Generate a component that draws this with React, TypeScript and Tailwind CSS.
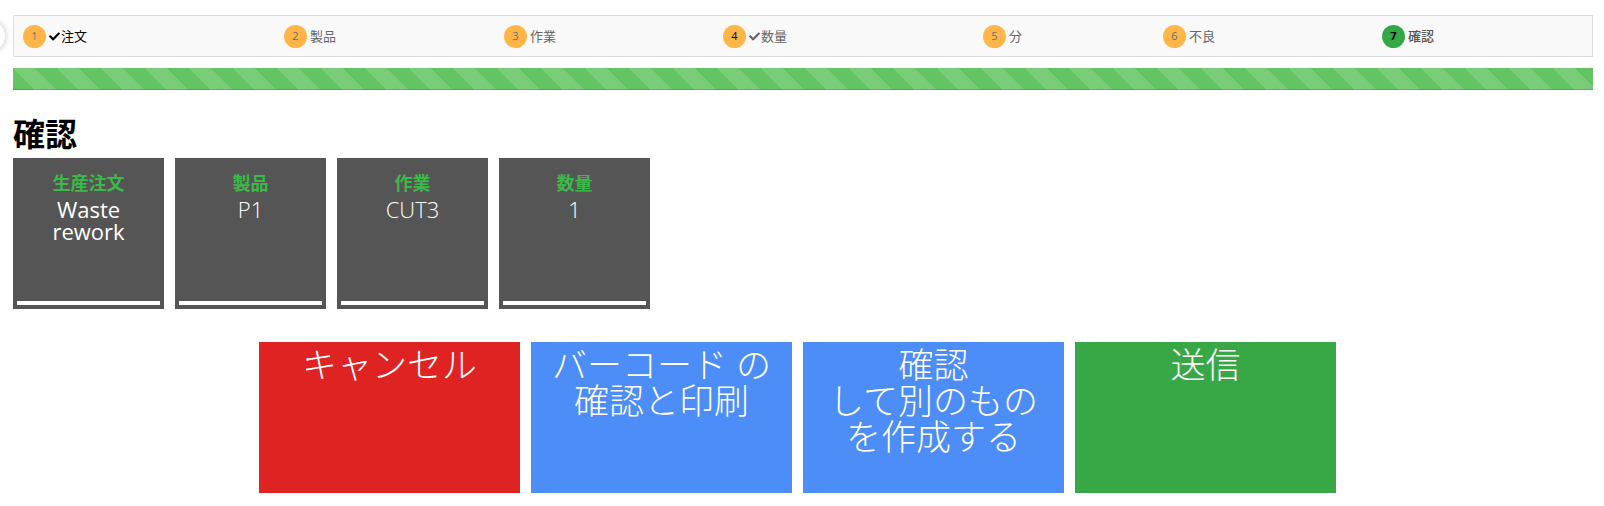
import { FaCheck } from "react-icons/fa";

const STEPS = [
  { n: 1, label: "注文", done: true, state: "current", col: "w-[261px]" },
  { n: 2, label: "製品", done: false, state: "todo", col: "w-[220px]" },
  { n: 3, label: "作業", done: false, state: "todo", col: "w-[219px]" },
  { n: 4, label: "数量", done: true, state: "todo", col: "w-[260px]" },
  { n: 5, label: "分", done: false, state: "todo", col: "w-[180px]" },
  { n: 6, label: "不良", done: false, state: "todo", col: "w-[219px]" },
  { n: 7, label: "確認", done: false, state: "active", col: "flex-1" },
];

const SUMMARY = [
  { title: "生産注文", value: "Waste rework", light: false },
  { title: "製品", value: "P1", light: true },
  { title: "作業", value: "CUT3", light: true },
  { title: "数量", value: "1", light: true },
];

const StepItem = ({ step }: { step: (typeof STEPS)[number] }) => {
  const circle =
    step.state === "active"
      ? "bg-[#33a946] text-black font-bold"
      : step.n === 4
        ? "bg-[#ffb547] text-black"
        : "bg-[#ffb547] text-[#6f6f6f]";
  const text =
    step.state === "current"
      ? "text-black"
      : step.state === "active"
        ? "text-[#555] font-medium"
        : "text-[#666]";

  return (
    <div className={`${step.col} flex items-center`}>
      <span
        className={`w-[23px] h-[23px] rounded-full flex items-center justify-center text-[11px] ${circle}`}
      >
        {step.n}
      </span>
      <span className={`ml-[3px] flex items-center text-[13px] leading-none ${text}`}>
        {step.done && <FaCheck className="w-[11px] h-[11px] mr-[1px]" />}
        {step.label}
      </span>
    </div>
  );
};

const ActionButton = ({ color, lines }: { color: string; lines: string[] }) => (
  <button
    className={`w-[261px] h-[151px] ${color} pt-[5px] text-white text-[35px] leading-[36px] font-light text-center flex flex-col items-center justify-start`}
  >
    {lines.map((l) => (
      <span key={l} className="block whitespace-pre">
        {l}
      </span>
    ))}
  </button>
);

export default function App() {
  return (
    <div className="relative w-[1604px] h-[506px] overflow-hidden bg-white font-['Open_Sans','Noto_Sans_CJK_JP',sans-serif]">
      <div className="absolute -left-[27px] top-[20px] w-[32px] h-[32px] rounded-full bg-white shadow-[0_0_6px_rgba(0,0,0,0.25)]" />

      <div className="pl-[13px] pr-[11px] pt-[15px]">
        <div className="h-[42px] border border-[#dddddd] bg-[#f9f9f9] flex items-center pl-[9px]">
          {STEPS.map((s) => (
            <StepItem key={s.n} step={s} />
          ))}
        </div>

        <div className="mt-[11px] h-[22px] bg-[#62c462] bg-[linear-gradient(45deg,rgba(255,255,255,0.15)_25%,transparent_25%,transparent_50%,rgba(255,255,255,0.15)_50%,rgba(255,255,255,0.15)_75%,transparent_75%,transparent)] bg-[length:44px_44px] shadow-[inset_0_-1px_0_rgba(0,0,0,0.15)]" />

        <h2 className="mt-[25px] text-[32px] leading-[38px] font-bold text-black">確認</h2>

        <div className="mt-[5px] flex gap-[11px]">
          {SUMMARY.map((item) => (
            <div
              key={item.title}
              className="w-[151px] h-[151px] bg-[#555555] flex flex-col items-center pt-[13px]"
            >
              <p className="text-[18px] leading-[24px] font-bold text-[#3cb94a]">{item.title}</p>
              <p
                className={`mt-[3px] w-[120px] text-center text-[22px] leading-[22px] text-white ${
                  item.light ? "font-light" : ""
                }`}
              >
                {item.value}
              </p>
              <div className="mt-auto mb-[4px] h-[4px] self-stretch mx-[4px] bg-white" />
            </div>
          ))}
        </div>

        <div className="mt-[33px] flex justify-center gap-[11px] pr-[11px]">
          <ActionButton color="bg-[#df2222]" lines={["キャンセル"]} />
          <ActionButton color="bg-[#4c8df7]" lines={["バーコード の", "確認と印刷"]} />
          <ActionButton color="bg-[#4c8df7]" lines={["確認", "して別のもの", "を作成する"]} />
          <ActionButton color="bg-[#38a846]" lines={["送信"]} />
        </div>
      </div>
    </div>
  );
}
